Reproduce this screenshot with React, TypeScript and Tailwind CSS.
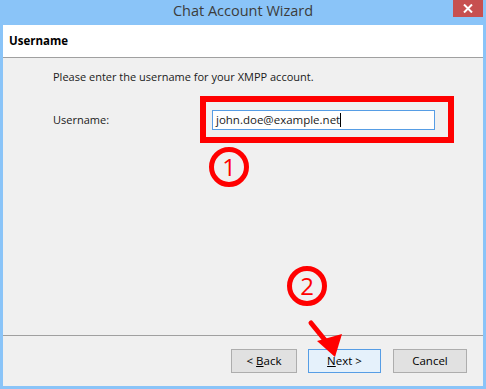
export default function App() {
  return (
    <div
      className="relative w-[486px] h-[389px] bg-[#8ac4f8] flex flex-col overflow-hidden"
      style={{ fontFamily: '"Open Sans", "Noto Sans", sans-serif' }}
    >
      {/* Title bar */}
      <div className="relative h-[25px] flex items-center justify-center">
        <span className="text-[14.5px] leading-none text-[#3c3c3c] -mt-[2px]">Chat Account Wizard</span>
        <button className="absolute top-0 right-[3px] w-[30px] h-[17px] bg-[#c75050] flex items-center justify-center">
          <svg width="10" height="9" viewBox="0 0 10 9">
            <path d="M1 0.5 L9 8.5 M9 0.5 L1 8.5" stroke="#fff" strokeWidth="2" />
          </svg>
        </button>
      </div>

      {/* Client area */}
      <div className="flex-1 mx-[3px] mb-[3px] bg-[#f0f0f0] flex flex-col">
        {/* Page header */}
        <div className="h-[33px] bg-white border-b border-[#a0a0a0] flex items-center px-[6px]">
          <span className="text-[11.5px] font-bold text-black">Username</span>
        </div>

        {/* Page body */}
        <div className="flex-1 pl-[50px] pt-[11px] text-[11px] text-[#1a1a1a]">
          <p className="leading-[16px]">Please enter the username for your XMPP account.</p>
          <div className="flex items-center mt-[25px]">
            <span className="w-[159px]">Username:</span>
            <div className="w-[223px] h-[20px] bg-white border border-[#569de5] flex items-center px-[3px] text-[11.5px]">
              <span>john.doe@example.net</span>
              <span className="w-px h-[14px] bg-black" />
            </div>
          </div>
        </div>

        {/* Footer */}
        <div className="h-[51px] border-t border-[#a0a0a0] flex items-center justify-end pr-[16px] text-[11.5px] text-black">
          <button className="w-[66px] h-[24px] bg-[#e1e1e1] border border-[#adadad]">
            &lt; <span className="underline">B</span>ack
          </button>
          <button className="ml-[11px] w-[73px] h-[24px] bg-[#e5f1fb] border border-[#569de5]">
            <span className="underline">N</span>ext &gt;
          </button>
          <button className="ml-[12px] w-[74px] h-[24px] bg-[#e1e1e1] border border-[#adadad]">
            Cancel
          </button>
        </div>
      </div>

      {/* Annotations */}
      <div className="absolute left-[200px] top-[96px] w-[254px] h-[47px] border-[6px] border-[#ff0000]" />
      <svg className="absolute inset-0 pointer-events-none" width="486" height="389">
        <circle cx="229" cy="167" r="17.5" fill="none" stroke="#ff0000" strokeWidth="5" />
        <text x="229" y="176" textAnchor="middle" fontSize="24" fill="#ff0000" fontFamily="Open Sans, sans-serif">1</text>
        <circle cx="307" cy="286" r="17.5" fill="none" stroke="#ff0000" strokeWidth="5" />
        <text x="307" y="295" textAnchor="middle" fontSize="24" fill="#ff0000" fontFamily="Open Sans, sans-serif">2</text>
        <line x1="311" y1="323" x2="329" y2="345" stroke="#ff0000" strokeWidth="5" strokeLinecap="round" />
        <polygon points="335,357 317,341 342,334" fill="#ff0000" />
      </svg>
    </div>
  );
}
